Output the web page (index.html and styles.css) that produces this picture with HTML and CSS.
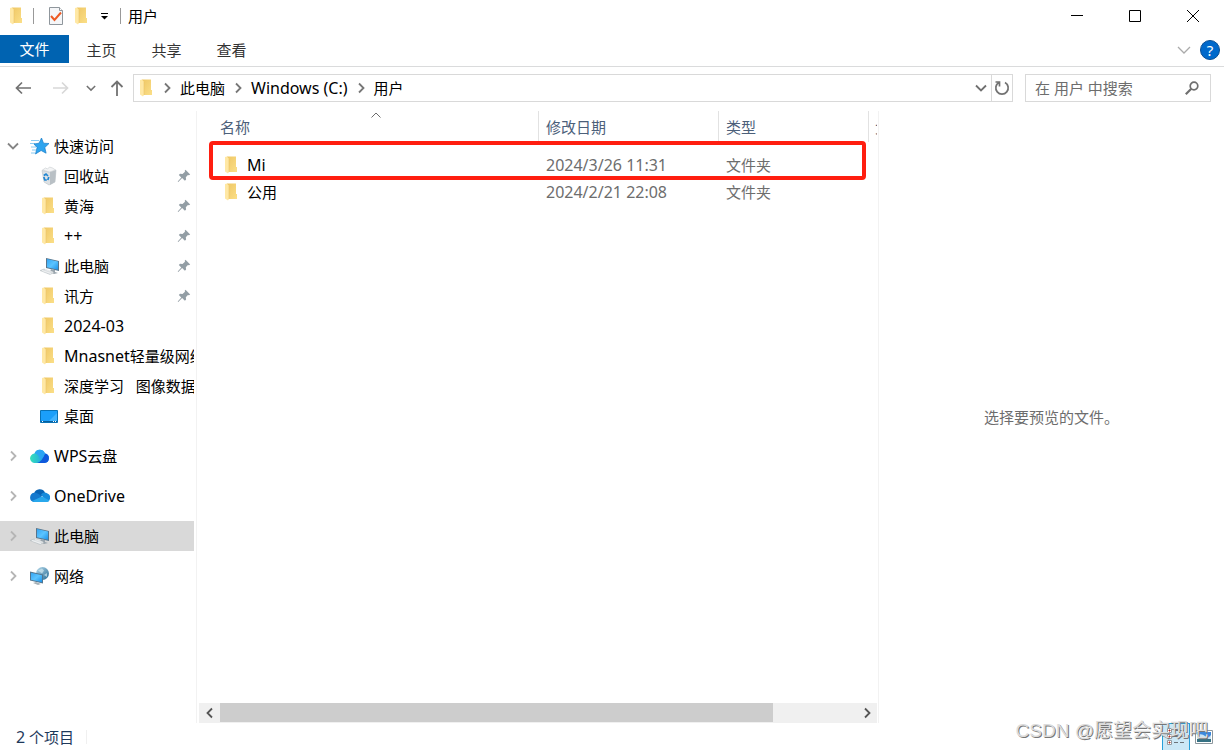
FILE: index.html
```html
<!DOCTYPE html>
<html lang="zh-CN">
<head>
<meta charset="utf-8">
<title>用户</title>
<link rel="stylesheet" href="styles.css">
</head>
<body>
<svg class="defs" aria-hidden="true">
  <defs>
    <linearGradient id="gold" x1="0" x2="1" y1="0" y2="1"><stop offset="0" stop-color="#efc765"/><stop offset="1" stop-color="#fbdf88"/></linearGradient>
    <linearGradient id="screen" x1="0" x2="1" y1="0" y2="1"><stop offset="0" stop-color="#35a5f3"/><stop offset=".5" stop-color="#5bc4ff"/><stop offset="1" stop-color="#1b91e8"/></linearGradient>
    <linearGradient id="wps" x1="0" x2="1" y1="0" y2="0"><stop offset="0" stop-color="#34e0ba"/><stop offset="1" stop-color="#1a8cf5"/></linearGradient>
    <linearGradient id="globe" x1="0" x2="1" y1="0" y2="1"><stop offset="0" stop-color="#b9dced"/><stop offset="1" stop-color="#246a94"/></linearGradient>
    <symbol id="folder" viewBox="0 0 16 20">
      <path d="M4 1.500h9v10.500h1v5H4z" fill="url(#gold)"/>
      <path d="M2 2l2-.5 2 2.500v13l-1 1.500-3-2z" fill="#ffe8a5"/>
      <path d="M6 4v13" stroke="#eac36a" stroke-width=".6"/>
    </symbol>
    <symbol id="pc" viewBox="0 0 20 20">
      <path d="M6 2l13 3v10L6 12z" fill="#58748a"/>
      <path d="M7 3l11 2.600v8.200L7 11.200z" fill="url(#screen)"/>
      <path d="M11 13l4 1v2l3 1-4 1-4-2z" fill="#9aa5ad"/>
      <path d="M0 14.500l4-1.500 10 3.500-4 2z" fill="#d9dee1" stroke="#b1b8bc" stroke-width=".5"/>
      <path d="M2 14.500l9 3M5 13.500l8 2.700" stroke="#fff" stroke-width=".6"/>
    </symbol>
    <symbol id="pin" viewBox="0 0 14 14">
      <path d="M8.500.8l4.700 4.600-1.300.8-1-.3-2.100 2.300.3 2.400-1.200 1.200-2.800-2.700L1.300 13l-.6-.6 3.600-4L1.800 6 3 4.800l2.500.2 2.500-2.200-.3-1z" fill="#939ea5"/>
    </symbol>
    <symbol id="right" viewBox="0 0 10 12"><path d="M3 1.500L7.500 6 3 10.500" fill="none" stroke="currentColor" stroke-width="1.800"/></symbol>
    <symbol id="down" viewBox="0 0 12 12"><path d="M1 3.500l5 5 5-5" fill="none" stroke="currentColor" stroke-width="1.800"/></symbol>
  </defs>
</svg>

<div class="window">
  <header class="titlebar">
    <svg class="folder"><use href="#folder"/></svg>
    <span class="rule first"></span>
    <button class="quick" aria-label="属性">
      <svg width="16" height="20" viewBox="0 0 16 20"><path d="M1.500 1.500h10l3 3v14h-13z" fill="#f5f6f8" stroke="#8f969c"/><path d="M11.500 1.500v3h3" fill="#fff" stroke="#8f969c"/><path d="M3 10l3.500 4L13 6.500" fill="none" stroke="#ed5a24" stroke-width="2"/></svg>
    </button>
    <button class="quick" aria-label="新建文件夹"><svg class="folder"><use href="#folder"/></svg></button>
    <button class="quick menu" aria-label="自定义快速访问工具栏"><svg width="7" height="8" viewBox="0 0 7 8"><path d="M0 1.500h7" stroke="#000"/><path d="M0 4h7L3.500 7.500z"/></svg></button>
    <span class="rule"></span>
    <h1>用户</h1>
    <div class="controls">
      <button aria-label="最小化"><svg width="12" height="12" viewBox="0 0 12 12"><path d="M0 5.500h12"/></svg></button>
      <button aria-label="最大化"><svg width="12" height="12" viewBox="0 0 12 12"><path d="M.5.5h11v11H.5z"/></svg></button>
      <button aria-label="关闭"><svg width="12" height="12" viewBox="0 0 12 12"><path d="M0 0l12 12M12 0L0 12"/></svg></button>
    </div>
  </header>

  <nav class="ribbon">
    <button class="tab file">文件</button>
    <button class="tab">主页</button>
    <button class="tab">共享</button>
    <button class="tab">查看</button>
    <div class="ribbon-end">
      <button aria-label="展开功能区"><svg width="14" height="12" viewBox="0 0 14 12"><path d="M1 3l6 6 6-6" fill="none" stroke="#aaa" stroke-width="1.300"/></svg></button>
      <button class="help" aria-label="帮助">?</button>
    </div>
  </nav>

  <div class="toolbar">
    <div class="history">
      <button aria-label="后退"><svg width="16" height="14" viewBox="0 0 16 14"><path d="M16 7H1.500M7 1.500L1.500 7 7 12.500" fill="none" stroke="#727272" stroke-width="1.700"/></svg></button>
      <button aria-label="前进"><svg width="16" height="14" viewBox="0 0 16 14"><path d="M0 7h14.500M9 1.500L14.500 7 9 12.500" fill="none" stroke="#d8d8d8" stroke-width="1.700"/></svg></button>
      <button class="recent" aria-label="最近浏览的位置"><svg width="10" height="10"><use href="#down"/></svg></button>
      <button class="up" aria-label="上移"><svg width="14" height="16" viewBox="0 0 14 16"><path d="M7 16V1.500M1.500 7L7 1.500 12.500 7" fill="none" stroke="#727272" stroke-width="1.800"/></svg></button>
    </div>
    <div class="address">
      <svg class="folder"><use href="#folder"/></svg>
      <svg class="sep"><use href="#right"/></svg>
      <a href="#">此电脑</a>
      <svg class="sep"><use href="#right"/></svg>
      <a href="#" class="latin">Windows (C:)</a>
      <svg class="sep"><use href="#right"/></svg>
      <a href="#">用户</a>
      <button class="drop" aria-label="以前的位置"><svg width="12" height="12"><use href="#down"/></svg></button>
      <button class="refresh" aria-label="刷新"><svg width="16" height="16" viewBox="0 0 16 16"><path d="M5 2.500A6.200 6.200 0 1 0 11 2.500M5.500 6.500V2H1.500" fill="none" stroke="#727272" stroke-width="1.700"/></svg></button>
    </div>
    <form class="search">
      <input type="text" aria-label="搜索" placeholder="在 用户 中搜索">
      <button type="button" aria-label="搜索"><svg width="14" height="14" viewBox="0 0 14 14"><circle cx="9" cy="5" r="3.800" fill="none" stroke="#6f6f6f" stroke-width="1.700"/><path d="M6.300 7.700L.8 13.200" stroke="#6f6f6f" stroke-width="2.200"/></svg></button>
    </form>
  </div>

  <div class="body">
    <nav class="sidebar">
      <ul class="group">
        <li class="row root">
          <svg class="toggle open"><use href="#down"/></svg>
          <svg class="icon" viewBox="0 0 20 20"><path d="M1 4.500h8M0 7.500h5M1 11h5M2 14h4M1 17h4" stroke="#7cc4f0" stroke-width=".9"/><path d="M11.500 2l2 5.200 5.500.3-4.200 4 1.300 5.700-5-2.700-5.600 3.500 1.600-6.500L4 8l5-.8z" fill="#2ea4ee" stroke="#187dc9" stroke-width=".7"/></svg>
          <span>快速访问</span>
        </li>
        <li class="row">
          <svg class="icon" viewBox="0 0 20 20"><path d="M2 4.500L9 6l7-2-1 12-6 3-5-3z" fill="#dde1e4" stroke="#b3babf" stroke-width=".5"/><path d="M10 6l6-2-1 12-5 3z" fill="#b9c0c5"/><path d="M2.500 4l3-2 2 1 2-2 3 1 3 2-6 2z" fill="#f3f4f5" stroke="#c6cbcf" stroke-width=".6"/><path d="M3.800 9.500L6 8l2 2M3.800 11l1 3h2M8.800 11l-1 3" fill="none" stroke="#2187d2" stroke-width="1.700"/></svg>
          <span>回收站</span><svg class="pin"><use href="#pin"/></svg>
        </li>
        <li class="row"><svg class="folder"><use href="#folder"/></svg><span>黄海</span><svg class="pin"><use href="#pin"/></svg></li>
        <li class="row"><svg class="folder"><use href="#folder"/></svg><span class="latin">++</span><svg class="pin"><use href="#pin"/></svg></li>
        <li class="row"><svg class="icon"><use href="#pc"/></svg><span>此电脑</span><svg class="pin"><use href="#pin"/></svg></li>
        <li class="row"><svg class="folder"><use href="#folder"/></svg><span>讯方</span><svg class="pin"><use href="#pin"/></svg></li>
        <li class="row"><svg class="folder"><use href="#folder"/></svg><span class="latin">2024-03</span></li>
        <li class="row"><svg class="folder"><use href="#folder"/></svg><span><span class="latin">Mnasnet</span>轻量级网络</span></li>
        <li class="row"><svg class="folder"><use href="#folder"/></svg><span>深度学习 &nbsp; 图像数据</span></li>
        <li class="row">
          <svg class="icon" viewBox="0 0 20 20"><path d="M.5 4.500h17v12H.5z" fill="#1b9ffa" stroke="#0872b6"/><path d="M8 16l9-9v9z" fill="#42b4ff"/><path d="M1 15.500h16" stroke="#075e9c"/><path d="M2 15.500h1M13 15.500h1M15 15.500h1" stroke="#fff"/></svg>
          <span>桌面</span>
        </li>
      </ul>
      <ul class="group">
        <li class="row root">
          <svg class="toggle"><use href="#right"/></svg>
          <svg class="icon" viewBox="0 0 20 20"><path d="M5 17a4.700 4.700 0 0 1-.5-9.400A5.500 5.500 0 0 1 15 7.500 4.800 4.800 0 0 1 14.500 17z" fill="url(#wps)"/><path d="M15 7.500a4.800 4.800 0 0 1-.5 9.500H7q5-1 8-9.500z" fill="#0f58dc"/><path d="M4.500 7.600A5.500 5.500 0 0 1 15 7.500q-2 5-5 6Q9 8 4.500 7.600z" fill="#2ba4f3"/></svg>
          <span><span class="latin">WPS</span>云盘</span>
        </li>
      </ul>
      <ul class="group">
        <li class="row root">
          <svg class="toggle"><use href="#right"/></svg>
          <svg class="icon" viewBox="0 0 20 20"><path d="M4 7.500a6 6 0 0 1 11-1q-2 3.500-5 4.500z" fill="#0864b5"/><path d="M3.500 16a4.700 4.700 0 0 1 1-9.200q3.500 0 7.500 4.200l-7 5z" fill="#1479ce"/><path d="M11 8.500Q14 5 17.500 7.600a4.400 4.400 0 0 1-1 8.400z" fill="#168bdc"/><path d="M2 15L12 10.500l7.500 4q-1 1.500-3 1.500H5q-2 0-3-1z" fill="#29a8ec"/></svg>
          <span class="latin">OneDrive</span>
        </li>
      </ul>
      <ul class="group">
        <li class="row root selected">
          <svg class="toggle"><use href="#right"/></svg>
          <svg class="icon"><use href="#pc"/></svg>
          <span>此电脑</span>
        </li>
      </ul>
      <ul class="group">
        <li class="row root">
          <svg class="toggle"><use href="#right"/></svg>
          <svg class="icon" viewBox="0 0 20 20"><circle cx="12.500" cy="7.500" r="6.500" fill="url(#globe)"/><path d="M8 4.500l4-2 2 2-2 3zM14 9l3-2v4z" fill="#d8edf3" opacity=".65"/><path d="M0 5.500l13 3v9L0 14.500z" fill="#52768f"/><path d="M1 6.700l11 2.600v7l-11-2.600z" fill="url(#screen)"/><path d="M3 17l3-1 5 2-3 1z" fill="#a5b0b6"/></svg>
          <span>网络</span>
        </li>
      </ul>
    </nav>

    <main class="list">
      <svg class="sort" viewBox="0 0 10 6"><path d="M.5 5.500L5 1l4.500 4.500" fill="none" stroke="#6c6c6c"/></svg>
      <div class="files">
        <table>
          <colgroup><col class="name"><col class="date"><col class="type"><col></colgroup>
          <thead><tr><th>名称</th><th>修改日期</th><th>类型</th><th>大小</th></tr></thead>
          <tbody>
            <tr><td><span class="file-name"><svg class="folder"><use href="#folder"/></svg><span class="latin">Mi</span></span></td><td class="latin">2024/3/26 11:31</td><td>文件夹</td><td></td></tr>
            <tr><td><span class="file-name"><svg class="folder"><use href="#folder"/></svg>公用</span></td><td class="latin">2024/2/21 22:08</td><td>文件夹</td><td></td></tr>
          </tbody>
        </table>
      </div>
      <div class="highlight"></div>
      <div class="scrollbar">
        <button aria-label="向左滚动"><svg class="flip" width="10" height="12"><use href="#right"/></svg></button>
        <div class="track"><div class="thumb"></div></div>
        <button aria-label="向右滚动"><svg width="10" height="12"><use href="#right"/></svg></button>
      </div>
    </main>

    <aside class="preview">选择要预览的文件。</aside>
  </div>

  <footer class="status">
    <span class="count"><span class="latin">2</span> 个项目</span>
    <div class="views">
      <button class="details" aria-label="详细信息"><svg width="18" height="20" viewBox="0 0 18 20"><path d="M.5 1.500h4v4h-4zM.5 7.500h4v4h-4zM.5 13.500h4v4h-4z" fill="#fff" stroke="#929ba0"/><path d="M2 3h1v1H2zM2 9h1v1H2zM2 15h1v1H2z" fill="#b53022" stroke="#b53022"/><path d="M7 3.500h4m2 0h4M7 9.500h4m2 0h4M7 15.500h4m2 0h4" stroke="#6b747a"/></svg></button>
      <button class="large" aria-label="大图标"><svg width="18" height="14" viewBox="0 0 18 14"><path d="M.5.5h17v13H.5z" fill="#fff" stroke="#8d979d"/><path d="M2 2h14v10H2z" fill="#3c88dc"/><path d="M2 5q5-2 8 1t6-1v4H2z" fill="#cbe5f5"/><path d="M2 9h14v3H2z" fill="#367183"/></svg></button>
    </div>
  </footer>
  <div class="watermark">CSDN @愿望会实现吧</div>
</div>
</body>
</html>
```
FILE: styles.css
```css
* { box-sizing: border-box; }
body {
  margin: 0;
  background: #fff;
  color: #000;
  font: 15px/20px "Noto Sans", "Noto Sans CJK SC", sans-serif;
}
button, input { font: inherit; color: inherit; }
button { display: flex; align-items: center; justify-content: center; padding: 0; border: 0; background: none; }
a { color: inherit; text-decoration: none; }
h1 { margin: 0; font-size: 15px; font-weight: 400; }
ul { margin: 0; padding: 0; list-style: none; }
svg { display: block; flex: none; }
.defs { position: absolute; width: 0; height: 0; }
.folder { width: 16px; height: 20px; }
.latin { font-size: 16px; }

.window { position: relative; display: flex; flex-direction: column; min-height: 100vh; overflow: hidden; }

.titlebar { display: flex; align-items: center; height: 35px; padding: 0 0 3px 8px; }
.rule { width: 1px; height: 16px; background: #999; }
.rule.first { margin: 0 14px 0 9px; }
.quick { margin-right: 9px; }
.quick.menu { width: 12px; margin-right: 10px; }
.titlebar h1 { margin-left: 7px; }
.controls { display: flex; margin-left: auto; padding-right: 2px; }
.controls button { width: 58px; height: 32px; }
.controls path { fill: none; stroke: #000; }

.ribbon { display: flex; height: 32px; border-bottom: 1px solid #dadbdc; color: #333; }
.tab { width: 65px; height: 29px; }
.tab.file { width: 69px; height: 28px; background: #0063b1; color: #fff; }
.ribbon-end { display: flex; align-items: center; gap: 9px; height: 29px; margin-left: auto; padding-right: 4px; }
.help { width: 20px; height: 20px; border: 1px solid #0a4f94; border-radius: 50%; background: #0069cb; color: #fff; }

.toolbar { display: flex; padding: 7px 13px 9px 15px; }
.history { display: flex; align-items: center; width: 118px; color: #727272; }
.history button + button { margin-left: 22px; }
.history .recent { margin-left: 17px; }
.history button.up { margin-left: 14px; }
.address { display: flex; flex: 1; align-items: center; height: 28px; padding-left: 4px; border: 1px solid #d9d9d9; }
.sep { width: 10px; height: 12px; margin: 0 8px; color: #777; }
.drop { width: 20px; height: 26px; margin-left: auto; color: #707070; }
.refresh { width: 21px; height: 26px; border-left: 1px solid #d9d9d9; }
.search { display: flex; align-items: center; width: 186px; height: 28px; margin-left: 12px; padding: 0 11px 0 9px; border: 1px solid #d9d9d9; }
.search input { flex: 1; min-width: 0; padding: 0; border: 0; outline: 0; background: none; }
.search input::placeholder { color: #6d6d6d; opacity: 1; }

.body { display: grid; flex: 1; grid-template-columns: 197px 682fr 345fr; }
.sidebar { padding: 20px 2px 0 0; border-right: 1px solid #f2f2f2; }
.group + .group { margin-top: 10px; }
.row { display: flex; align-items: center; gap: 4px; height: 30px; padding-left: 40px; overflow: hidden; white-space: nowrap; }
.row .folder { margin-right: 4px; }
.row.root { padding-left: 7px; }
.row.selected { background: #d9d9d9; }
.icon { width: 20px; height: 20px; }
.toggle { width: 12px; height: 12px; margin-right: 7px; color: #b5b5b5; }
.toggle.open { color: #858585; }
.pin { width: 14px; height: 14px; margin-left: auto; margin-right: 3px; }

.list { position: relative; display: flex; flex-direction: column; min-width: 0; padding: 0 1px 0 2px; border-right: 1px solid #f2f2f2; }
.files { flex: 1; overflow: hidden; }
table { width: 100%; table-layout: fixed; border-collapse: separate; border-spacing: 0; }
.name { width: 340px; }
.date { width: 180px; }
.type { width: 150px; }
th { height: 31px; padding: 0 0 0 7px; overflow: hidden; border-right: 1px solid #e2e2e2; color: #4c607a; font-weight: 400; text-align: left; white-space: nowrap; }
th:last-child { padding-left: 6px; border-right: 0; }
th:first-child { padding-left: 21px; }
tbody::before { content: ""; display: block; height: 9px; }
td { height: 27px; padding: 0 0 0 7px; color: #6d6d6d; white-space: nowrap; }
td:first-child { padding-left: 24px; color: #000; }
.file-name { display: flex; align-items: center; gap: 8px; }
.sort { position: absolute; top: 1px; left: 174px; width: 10px; height: 6px; }
.highlight { position: absolute; top: 30px; left: 12px; right: 12px; height: 39px; border: 4px solid #ff1e10; border-radius: 4px; }
.scrollbar { display: flex; height: 20px; background: #f0f0f0; color: #555; }
.scrollbar button { width: 21px; height: 20px; }
.flip { transform: scaleX(-1); }
.track { flex: 1; }
.thumb { width: 87%; height: 19px; background: #cdcdcd; }

.preview { display: flex; align-items: center; justify-content: center; color: #6d6d6d; }

.status { display: flex; align-items: center; justify-content: space-between; height: 27px; padding: 0 11px 0 16px; color: #1e395b; }
.count { padding-right: 12px; border-right: 1px solid #f0f0f0; line-height: 14px; }
.views { display: flex; align-items: center; gap: 5px; }
.details { width: 28px; height: 27px; border: 1px solid #26a0da; border-bottom: 0; background: #cbe8f6; }
.watermark { position: absolute; right: 16px; bottom: 6px; color: #dcdcdc; font: 19px/26px "Liberation Sans", "Noto Sans CJK SC", sans-serif; text-shadow: 1px 1px 0 #777; white-space: nowrap; pointer-events: none; }
```
